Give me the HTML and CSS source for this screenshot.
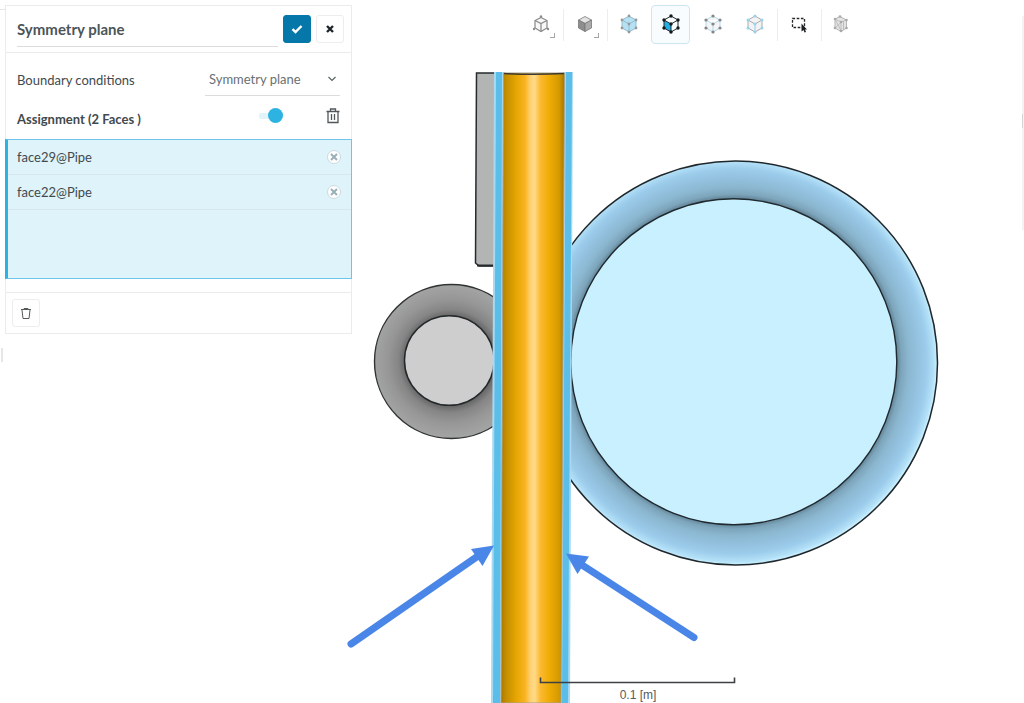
FILE: index.html
```html
<!DOCTYPE html>
<html lang="en">
<head>
<meta charset="utf-8">
<meta name="viewport" content="width=device-width, initial-scale=1">
<title>Symmetry plane</title>
<link rel="stylesheet" href="styles.css">
</head>
<body>
<main class="app">
  <svg class="scene" viewBox="0 0 1024 703" preserveAspectRatio="xMidYMid slice" role="img" aria-label="Pipe model with highlighted symmetry faces">
    <defs>
      <linearGradient id="pipe" x1="0" x2="1" y1="0" y2="0">
        <stop offset="0" stop-color="#a87800"/>
        <stop offset=".08" stop-color="#c58e00"/>
        <stop offset=".24" stop-color="#e5a604"/>
        <stop offset=".38" stop-color="#fbb320"/>
        <stop offset=".46" stop-color="#ffd072"/>
        <stop offset=".53" stop-color="#ffda87"/>
        <stop offset=".62" stop-color="#fcb932"/>
        <stop offset=".76" stop-color="#efac06"/>
        <stop offset=".92" stop-color="#d39800"/>
        <stop offset="1" stop-color="#a37400"/>
      </linearGradient>
      <radialGradient id="blue-ring" gradientUnits="userSpaceOnUse" cx="734" cy="361.500" r="203">
        <stop offset=".8" stop-color="#5f8093"/>
        <stop offset=".825" stop-color="#7da5bb"/>
        <stop offset=".86" stop-color="#8bb7d0"/>
        <stop offset=".91" stop-color="#94c2e0"/>
        <stop offset=".95" stop-color="#9dcdec"/>
        <stop offset=".985" stop-color="#b4e1f8"/>
        <stop offset="1" stop-color="#c9f0ff"/>
      </radialGradient>
      <radialGradient id="grey-ring" gradientUnits="userSpaceOnUse" cx="450" cy="361" r="77">
        <stop offset=".57" stop-color="#626262"/>
        <stop offset=".67" stop-color="#858585"/>
        <stop offset=".8" stop-color="#969696"/>
        <stop offset="1" stop-color="#a3a5a4"/>
      </radialGradient>
    </defs>
    <path d="M476.500 73H498V266H479L475.500 263Z" fill="#b3b5b4" stroke="#252a2e" stroke-width="1.500"/>
    <path d="M477 265.500H498" stroke="#252a2e" stroke-width="2"/>
    <circle cx="451.500" cy="361.500" r="77" fill="url(#grey-ring)" stroke="#303234" stroke-width="1.400"/>
    <circle cx="449.300" cy="360.500" r="44.800" fill="#cecece" stroke="#23282b" stroke-width="1.500"/>
    <circle cx="735.500" cy="363" r="202" fill="url(#blue-ring)" stroke="#20272b" stroke-width="1.500"/>
    <circle cx="733.800" cy="361.800" r="163" fill="#c9f0ff" stroke="#20292e" stroke-width="1.400"/>
    <path d="M494 72H504L501 703H491Z" fill="#a9d9f2"/>
    <path d="M496 72H502L500 703H493Z" fill="#5bbee9"/>
    <path d="M564 72H573L570 703H560Z" fill="#a9d9f2"/>
    <path d="M566 72H572L568 703H562Z" fill="#5bbee9"/>
    <path d="M503.500 73H564.500L561 703H501Z" fill="url(#pipe)" stroke="#a7a18b"/>
    <path d="M504 73.500Q534 75 564 73.500" fill="none" stroke="#3d3930" stroke-width="1.500"/>
    <g fill="#4a86e8" stroke="#4a86e8">
      <path d="M351 644L478 556" stroke-width="7" stroke-linecap="round"/>
      <path d="M494 545.500L482.500 566L471 549Z" stroke="none"/>
      <path d="M694 637.500L582 565" stroke-width="7" stroke-linecap="round"/>
      <path d="M566 553.500L589 556.500L577.500 574Z" stroke="none"/>
    </g>
    <path d="M540.500 677.500V682.500H734.500V677.500" fill="none" stroke="#3c4145" stroke-width="1.600"/>
    <text class="scale-label" x="638" y="699" text-anchor="middle">0.1 [m]</text>
    <g fill="#e6e6e6">
      <path d="M1 348h2v14h-2z"/>
      <path d="M0 9h5v1h-5z"/>
      <path d="M1022 16h2v214h-2z" fill="#f3f3f3"/>
      <path d="M1022 114h1v14h-1z" fill="#d5d5d5"/>
    </g>
  </svg>

  <form class="panel">
    <header class="panel-header">
      <input class="title" type="text" value="Symmetry plane" aria-label="Name">
      <button class="button button-primary" type="button" aria-label="Apply">
        <svg width="12" height="12" viewBox="0 0 12 12"><path d="M1.500 6.200L4.500 9L10.500 3" fill="none" stroke="#fff" stroke-width="2.400"/></svg>
      </button>
      <button class="button" type="button" aria-label="Close">
        <svg width="10" height="10" viewBox="0 0 10 10"><path d="M2 2L8 8M8 2L2 8" stroke="#1e2529" stroke-width="2.400"/></svg>
      </button>
    </header>
    <div class="panel-body">
      <div class="row">
        <label for="condition">Boundary conditions</label>
        <div class="select-wrap">
          <select id="condition"><option>Symmetry plane</option></select>
          <svg class="chevron" width="10" height="6" viewBox="0 0 10 6"><path d="M1.500 1L5 4.500L8.500 1" fill="none" stroke="#5b6366" stroke-width="1.200"/></svg>
        </div>
      </div>
      <div class="row row-assignment">
        <label class="assignment-label" for="assign">Assignment (2 Faces )</label>
        <input class="toggle" id="assign" type="checkbox" checked>
        <button class="icon-button" type="button" aria-label="Clear assignment">
          <svg width="14" height="16" viewBox="0 0 14 16" fill="none" stroke="#50575a" stroke-width="1.300"><path d="M0.500 3.500H13.500M4.500 3V1H9.500V3M2 4V14.500H12V4M5.500 6V12M8.500 6V12"/></svg>
        </button>
      </div>
    </div>
    <ul class="faces">
      <li class="face">face29@Pipe
        <button class="remove" type="button" aria-label="Remove face29@Pipe"><svg width="8" height="8" viewBox="0 0 8 8"><path d="M1 1L7 7M7 1L1 7" stroke="#9ab0b9" stroke-width="2"/></svg></button>
      </li>
      <li class="face">face22@Pipe
        <button class="remove" type="button" aria-label="Remove face22@Pipe"><svg width="8" height="8" viewBox="0 0 8 8"><path d="M1 1L7 7M7 1L1 7" stroke="#9ab0b9" stroke-width="2"/></svg></button>
      </li>
    </ul>
    <footer class="panel-footer">
      <button class="button" type="button" aria-label="Delete">
        <svg width="12" height="12" viewBox="0 0 12 12" fill="none" stroke="#545b58"><path d="M1 2.500H11M4 2V1.500H8V2M2 3L3 11.500H9L10 3"/></svg>
      </button>
    </footer>
  </form>

  <nav class="toolbar" aria-label="View tools">
    <button class="tool has-menu" type="button" aria-label="View orientation">
      <svg class="cube" viewBox="0 0 24 24"><path d="M12 4V6M6 16L4.500 17M18 16L19.500 17" stroke="#8d8d8d"/><path d="M12 5.500L18 8.500V16L12 19.500L6 16V8.500Z" fill="#f8f8f8" stroke="#888" stroke-width="1.200"/><path d="M6 8.500L12 11.500L18 8.500M12 11.500V19.500" fill="none" stroke="#888" stroke-width="1.200"/><g fill="#8d8d8d"><circle cx="12" cy="4.500" r="1.200"/><circle cx="5" cy="17" r="1.200"/><circle cx="19" cy="17" r="1.200"/></g></svg>
    </button>
    <span class="separator"></span>
    <button class="tool has-menu" type="button" aria-label="Render mode">
      <svg class="cube" viewBox="0 0 24 24"><g stroke="#777" stroke-width=".8"><path d="M12 4.500L18.500 8L12 11.500L5.500 8Z" fill="#e4e4e4"/><path d="M5.500 8L12 11.500V19.500L5.500 16Z" fill="#8e8e8e"/><path d="M18.500 8L12 11.500V19.500L18.500 16Z" fill="#ababab"/></g></svg>
    </button>
    <span class="separator"></span>
    <div class="tool-group">
      <button class="tool" type="button" aria-label="Select volumes">
        <svg class="cube" viewBox="0 0 24 24"><g fill="#b6e1f5" stroke="#93bdd1"><path d="M12 4L19 8V16L12 20L5 16V8Z"/><path d="M5 8L12 12L19 8M12 12V20"/></g><g fill="#999"><circle cx="12" cy="4" r="1.400"/><circle cx="19" cy="8" r="1.400"/><circle cx="19" cy="16" r="1.400"/><circle cx="12" cy="20" r="1.400"/><circle cx="5" cy="16" r="1.400"/><circle cx="5" cy="8" r="1.400"/><circle cx="12" cy="12" r="1.400"/></g></svg>
      </button>
      <button class="tool is-active" type="button" aria-label="Select faces" aria-pressed="true">
        <svg class="cube" viewBox="0 0 24 24"><path d="M5 8L12 12V20L5 16Z" fill="#22aee5"/><path d="M12 4L19 8V16L12 20L5 16V8ZM5 8L12 12L19 8M12 12V20" fill="none" stroke="#252a2d"/><g fill="#15191b"><circle cx="12" cy="4" r="1.700"/><circle cx="19" cy="8" r="1.700"/><circle cx="19" cy="16" r="1.700"/><circle cx="12" cy="20" r="1.700"/><circle cx="5" cy="16" r="1.700"/><circle cx="5" cy="8" r="1.700"/><circle cx="12" cy="12" r="1.700"/></g></svg>
      </button>
      <button class="tool" type="button" aria-label="Select vertices">
        <svg class="cube" viewBox="0 0 24 24"><path d="M12 4L19 8V16L12 20L5 16V8ZM5 8L12 12L19 8M12 12V20" fill="#f3f5f6" stroke="#b4d9e9"/><g fill="#858585"><circle cx="12" cy="4" r="1.600"/><circle cx="19" cy="8" r="1.600"/><circle cx="19" cy="16" r="1.600"/><circle cx="12" cy="20" r="1.600"/><circle cx="5" cy="16" r="1.600"/><circle cx="5" cy="8" r="1.600"/><circle cx="12" cy="12" r="1.600"/></g></svg>
      </button>
      <button class="tool" type="button" aria-label="Select edges">
        <svg class="cube" viewBox="0 0 24 24"><path d="M12 4L19 8V16L12 20L5 16V8Z" fill="#f3f3f3" stroke="#aaa"/><path d="M5 8L12 12L19 8" fill="none" stroke="#aaa"/><path d="M12 12V20" stroke="#8fcdea"/><g fill="#96d3ef"><circle cx="12" cy="4" r="1.500"/><circle cx="19" cy="8" r="1.500"/><circle cx="19" cy="16" r="1.500"/><circle cx="12" cy="20" r="1.500"/><circle cx="5" cy="16" r="1.500"/><circle cx="5" cy="8" r="1.500"/><circle cx="12" cy="12" r="1.500"/></g></svg>
      </button>
    </div>
    <span class="separator"></span>
    <button class="tool" type="button" aria-label="Box selection">
      <svg class="cube" viewBox="0 0 24 24"><path d="M5.500 6.500H17.500V15.500H5.500Z" fill="none" stroke="#24282a" stroke-width="1.300" stroke-dasharray="2.600 1.600"/><path d="M14.500 11.500V19.500L16.500 18L17.500 20.500L19 20L18 17.500H20Z" fill="#1c2023"/></svg>
    </button>
    <span class="separator"></span>
    <button class="tool tool-last" type="button" aria-label="Mesh clip">
      <svg class="cube" viewBox="0 0 24 24"><path d="M6 7L11 4.500L17.500 8V16L12 19.500L6 16Z" fill="#e4e4e4" stroke="#b5b5b5"/><path d="M6 7L12 10L17.500 8M12 10V19M6.500 8L12 18.500M12 10.500L6 16M14.500 9V18" fill="none" stroke="#bcbcbc"/><g fill="#a9a9a9"><circle cx="6" cy="7" r="1.300"/><circle cx="11" cy="4.500" r="1.300"/><circle cx="17.500" cy="8" r="1.300"/><circle cx="17.500" cy="16" r="1.300"/><circle cx="12" cy="19" r="1.300"/><circle cx="6" cy="16" r="1.300"/><circle cx="12" cy="10" r="1.300"/></g></svg>
    </button>
  </nav>
</main>
</body>
</html>
```
FILE: styles.css
```css
* {
  box-sizing: border-box;
}

body {
  margin: 0;
  background: #fff;
  color: #414a4d;
  font: 13px/20px Lato, "Open Sans", sans-serif;
}

button,
input,
select {
  margin: 0;
  padding: 0;
  font: inherit;
  color: inherit;
}

button svg {
  display: block;
}

.app {
  position: relative;
  display: flex;
  align-items: flex-start;
  gap: 169px;
  min-height: 100vh;
  padding: 5px;
  overflow: hidden;
}

.scene {
  position: absolute;
  inset: 0;
  width: 100%;
  height: 100%;
}

.scale-label {
  font: 12px "Liberation Sans", Arial, sans-serif;
  fill: #555b5e;
}

.panel {
  position: relative;
  flex: 0 0 347px;
  border: 1px solid #ebebeb;
  background: #fff;
}

.panel-header {
  display: flex;
  align-items: flex-start;
  gap: 5px;
  padding: 9px 7px 5px 11px;
  border-bottom: 1px solid #ebebeb;
}

.title {
  flex: 1;
  min-width: 0;
  height: 32px;
  padding-bottom: 3px;
  border: 0;
  border-bottom: 1px solid #dcdcdc;
  background: none;
  color: #4c5558;
  font-size: 15px;
  font-weight: 700;
}

.button {
  display: grid;
  place-items: center;
  width: 28px;
  height: 28px;
  border: 1px solid #ededed;
  border-radius: 3px;
  background: #fff;
}

.button-primary {
  border-color: #0577a8;
  background: #0577a8;
}

.panel-body {
  padding: 10px 11px 0;
}

.row {
  display: flex;
  align-items: center;
  justify-content: space-between;
}

.select-wrap {
  display: grid;
  align-items: center;
  width: 135px;
  border-bottom: 1px solid #dcdcdc;
}

.select-wrap > * {
  grid-area: 1 / 1;
}

.select-wrap select {
  width: 100%;
  height: 32px;
  padding-left: 4px;
  border: 0;
  appearance: none;
  background: none;
  color: #697073;
}

.chevron {
  justify-self: end;
  margin-right: 3px;
  pointer-events: none;
}

.row-assignment {
  height: 43px;
  padding-bottom: 4px;
}

.assignment-label {
  flex: 1;
  padding-top: 7px;
  font-weight: 700;
}

.toggle {
  display: flex;
  align-items: center;
  justify-content: flex-end;
  width: 24px;
  height: 16px;
  margin-right: 43px;
  appearance: none;
  background: linear-gradient(#e2f3fa, #e2f3fa) center / 100% 6px no-repeat;
  border-radius: 8px;
}

.toggle::after {
  content: "";
  width: 15px;
  height: 15px;
  border-radius: 50%;
  background: #2cb3e2;
}

.icon-button {
  border: 0;
  background: none;
}

.faces {
  min-height: 140px;
  margin: 0 -1px;
  padding: 0;
  border: 1px solid #6cc6ec;
  border-left: 3px solid #2cb3e2;
  background: #dff3fb;
  list-style: none;
}

.face {
  display: flex;
  align-items: center;
  justify-content: space-between;
  height: 35px;
  padding: 0 10px 0 9px;
  border-bottom: 1px solid #d6e5ee;
}

.remove {
  display: grid;
  place-items: center;
  width: 14px;
  height: 14px;
  border: 1px solid #ccd9df;
  border-radius: 50%;
  background: #fff;
}

.panel-footer {
  margin-top: 13px;
  padding: 6px;
  border-top: 1px solid #ebebeb;
}

.toolbar {
  position: relative;
  display: flex;
  align-items: center;
  gap: 2px;
}

.tool-group {
  display: flex;
  gap: 3px;
}

.tool {
  position: relative;
  display: grid;
  place-items: center;
  width: 39px;
  height: 39px;
  padding-bottom: 1px;
  border: 1px solid transparent;
  border-radius: 4px;
  background: none;
}

.tool-last {
  width: 35px;
}

.is-active {
  border-color: #cfe6f1;
  background: #f8fcfe;
}

.has-menu::after {
  content: "";
  position: absolute;
  right: 4px;
  bottom: 5px;
  width: 4px;
  height: 4px;
  border: solid #a6a6a6;
  border-width: 0 1px 1px 0;
}

.cube {
  width: 24px;
  height: 24px;
}

.separator {
  width: 1px;
  height: 32px;
  margin: 0 -1px 0 1px;
  background: #ededed;
}
```
